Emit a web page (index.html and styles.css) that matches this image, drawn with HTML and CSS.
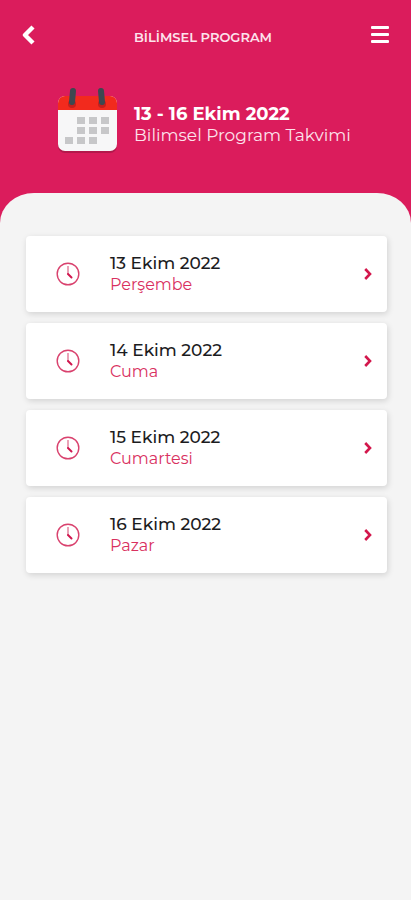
FILE: index.html
```html
<!DOCTYPE html>
<html lang="tr">
<head>
  <meta charset="UTF-8" />
  <meta name="viewport" content="width=device-width, initial-scale=1" />
  <title>Bilimsel Program</title>
  <link rel="stylesheet" href="styles.css">
</head>
<body>

  <header class="header">
    <nav class="top-bar">
      <button type="button" class="icon-btn" aria-label="Geri">
        <svg width="13" height="20" viewBox="0 0 13 20" fill="none" stroke="#fff" stroke-width="4.4" stroke-linejoin="round">
          <path d="M11 2 L3 10 L11 18" />
        </svg>
      </button>
      <h1 class="page-title">BİLİMSEL PROGRAM</h1>
      <button type="button" class="icon-btn" aria-label="Menü">
        <svg width="18" height="18" viewBox="0 0 18 18" fill="#fff">
          <rect x="0" y="0" width="18" height="3" rx="1" />
          <rect x="0" y="7" width="18" height="3" rx="1" />
          <rect x="0" y="14" width="18" height="3" rx="1" />
        </svg>
      </button>
    </nav>

    <div class="intro">
      <!-- Calendar -->
      <svg width="59" height="66" viewBox="0 0 59 66">
        <rect x="0" y="11" width="59" height="55" rx="7" fill="#b3184b" />
        <rect x="0" y="9" width="59" height="55" rx="7" fill="#f7f7f8" />
        <path d="M0 23 V16 A7 7 0 0 1 7 9 H52 A7 7 0 0 1 59 16 V23 Z" fill="#f22a1d" />
        <g fill="#c51f1c">
          <circle cx="14" cy="17" r="4" />
          <circle cx="44" cy="17" r="4" />
        </g>
        <g stroke="#3d4850" stroke-width="6" stroke-linecap="round">
          <path d="M15 4 L14 15" />
          <path d="M43 4 L44 15" />
        </g>
        <g fill="#c7c7c9">
          <rect x="19" y="30" width="8" height="7" />
          <rect x="31" y="30" width="8" height="7" />
          <rect x="43" y="30" width="8" height="7" />
          <rect x="19" y="40" width="8" height="7" />
          <rect x="31" y="40" width="8" height="7" />
          <rect x="43" y="40" width="8" height="7" />
          <rect x="7" y="50" width="8" height="7" />
          <rect x="19" y="50" width="8" height="7" />
          <rect x="31" y="50" width="8" height="7" />
        </g>
      </svg>
      <div class="intro-text">
        <strong>13 - 16 Ekim 2022</strong>
        <span>Bilimsel Program Takvimi</span>
      </div>
    </div>
  </header>

  <!-- Shared icons -->
  <svg class="sprite" aria-hidden="true">
    <symbol id="clock" viewBox="0 0 24 24">
      <circle cx="12" cy="12" r="10.8" fill="none" stroke="#d9426e" stroke-width="1.4" />
      <path d="M12 4 V12" fill="none" stroke="#e58ba5" stroke-width="1.6" />
      <path d="M12 12 L15.5 15.5" fill="none" stroke="#d0164e" stroke-width="2" stroke-linecap="round" />
    </symbol>
    <symbol id="arrow" viewBox="0 0 8 12">
      <path d="M1.2 1 L6 6 L1.2 11" fill="none" stroke="#d3174c" stroke-width="2.6" />
    </symbol>
  </svg>

  <main class="content">
    <ul class="day-list">
      <li>
        <a href="#" class="day-card">
          <svg class="clock"><use href="#clock" /></svg>
          <span class="day-text"><span class="date">13 Ekim 2022</span><span class="day">Perşembe</span></span>
          <svg class="arrow"><use href="#arrow" /></svg>
        </a>
      </li>
      <li>
        <a href="#" class="day-card">
          <svg class="clock"><use href="#clock" /></svg>
          <span class="day-text"><span class="date">14 Ekim 2022</span><span class="day">Cuma</span></span>
          <svg class="arrow"><use href="#arrow" /></svg>
        </a>
      </li>
      <li>
        <a href="#" class="day-card">
          <svg class="clock"><use href="#clock" /></svg>
          <span class="day-text"><span class="date">15 Ekim 2022</span><span class="day">Cumartesi</span></span>
          <svg class="arrow"><use href="#arrow" /></svg>
        </a>
      </li>
      <li>
        <a href="#" class="day-card">
          <svg class="clock"><use href="#clock" /></svg>
          <span class="day-text"><span class="date">16 Ekim 2022</span><span class="day">Pazar</span></span>
          <svg class="arrow"><use href="#arrow" /></svg>
        </a>
      </li>
    </ul>
  </main>

</body>
</html>
```

FILE: styles.css
```css
* {
  box-sizing: border-box;
}

body {
  margin: 0;
  min-height: 100vh;
  display: flex;
  flex-direction: column;
  background: #db1c5c;
  font-family: Montserrat, Inter, sans-serif;
}

svg {
  display: block;
  flex-shrink: 0;
}

.sprite {
  display: none;
}

/* Header */
.header {
  color: #fff;
  padding: 24px 22px 40px;
}

.top-bar {
  display: flex;
  align-items: center;
  justify-content: space-between;
  height: 22px;
}

.icon-btn {
  padding: 0;
  border: none;
  background: none;
  cursor: pointer;
}

.page-title {
  margin: 0;
  padding-top: 4px;
  font-size: 13px;
  font-weight: 600;
  line-height: 20px;
  color: #fde3ec;
}

.intro {
  display: flex;
  align-items: center;
  gap: 17px;
  margin-top: 41px;
  padding-left: 36px;
}

.intro-text {
  display: flex;
  flex-direction: column;
  padding-top: 10px;
  font-size: 18px;
  line-height: 21px;
}

.intro-text strong {
  font-weight: 700;
}

.intro-text span {
  font-size: 17px;
  font-weight: 400;
  color: #fde3ec;
}

/* Day list */
.content {
  flex: 1;
  padding: 43px 24px 43px 26px;
  background: #f4f4f4;
  border-radius: 34px 34px 0 0 / 30px 30px 0 0;
}

.day-list {
  list-style: none;
  margin: 0;
  padding: 0;
  display: flex;
  flex-direction: column;
  gap: 11px;
}

.day-card {
  display: flex;
  align-items: center;
  padding: 17px 15px 17px 30px;
  background: #fff;
  border-radius: 4px;
  box-shadow: 1px 2px 6px rgba(0, 0, 0, 0.14);
  text-decoration: none;
}

.day-text {
  flex: 1;
  display: flex;
  flex-direction: column;
  margin-left: 30px;
  font-size: 17px;
  line-height: 21px;
}

.date {
  font-weight: 500;
  color: #1c1c1e;
}

.day {
  font-size: 16px;
  font-weight: 400;
  color: #d9315f;
}

.clock {
  width: 24px;
  height: 24px;
}

.arrow {
  width: 8px;
  height: 12px;
}
```
